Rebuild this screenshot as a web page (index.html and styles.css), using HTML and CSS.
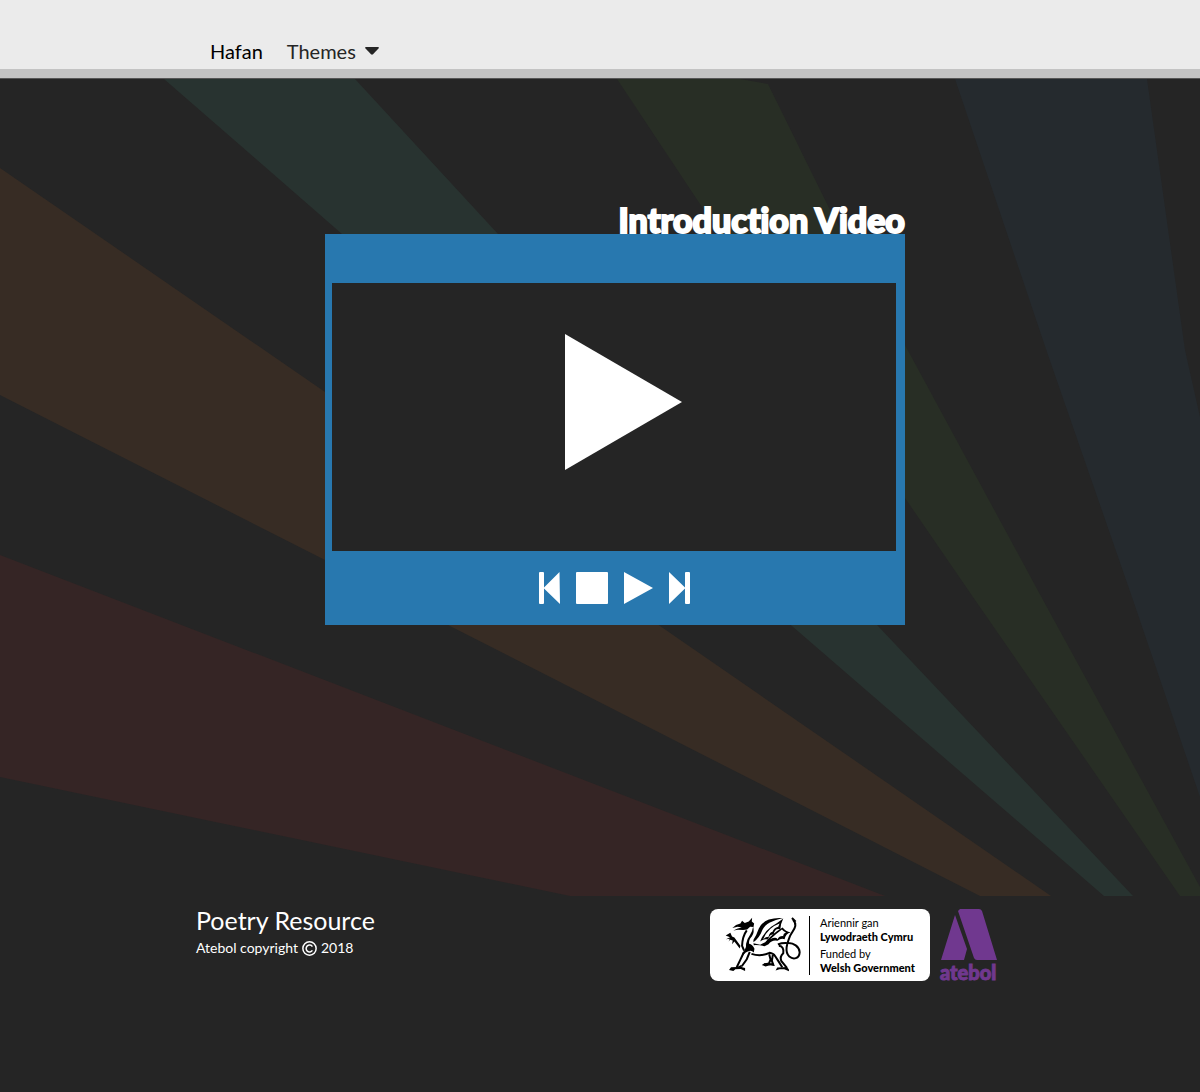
FILE: index.html
```html
<!DOCTYPE html>
<html lang="cy">
<head>
<meta charset="utf-8">
<meta name="viewport" content="width=device-width, initial-scale=1">
<title>Poetry Resource</title>
<link rel="stylesheet" href="styles.css">
</head>
<body>
<header class="site-header">
  <nav class="container nav">
    <a class="nav-link active" href="#">Hafan</a>
    <button class="nav-link nav-toggle" type="button">Themes
      <svg class="caret" viewBox="0 0 14 8" aria-hidden="true"><path d="M1 0h12q1.500 .2.500 1.500L8 7.300q-1 .9-2 0L.5 1.500Q-.5.200 1 0z"/></svg>
    </button>
  </nav>
</header>

<main class="hero">
  <svg class="rays" viewBox="0 0 1200 817" preserveAspectRatio="none" aria-hidden="true">
    <path fill="#372c24" d="M0 89 325 313 660 547 1051 817H980L780 715 450 547 325 481 0 316z"/>
    <path fill="#352525" d="M0 476 885 817H570L0 698z"/>
    <path fill="#283330" d="M164 0H355L498 155 878 547 1133 817H1104L792 547 342 155z"/>
    <path fill="#282e25" d="M617 0 740 0 768 5 830 131 905 266 1043 521 1200 808V817H1180L975 521 905 419 702 128z"/>
    <path fill="#252a2e" d="M955 0H1147L1185 271 1200 338V718L1133 521 1048 276z"/>
  </svg>
  <div class="container hero-inner">
    <section class="video">
      <h1 class="video-title">Introduction Video</h1>
      <div class="player">
        <button class="screen" type="button" aria-label="Play video">
          <svg class="big-play" viewBox="0 0 117 136"><path d="M0 0 117 68 0 136z"/></svg>
        </button>
        <div class="controls">
          <button type="button" aria-label="Previous"><svg width="21" height="32" viewBox="0 0 21 32"><path d="M1 0H4Q5 0 5 1V15.500L20.500 0 21 32 5 16.500V31Q5 32 4 32H1Q0 32 0 31V1Q0 0 1 0z"/></svg></button>
          <button type="button" aria-label="Stop"><svg width="32" height="32" viewBox="0 0 32 32"><rect width="32" height="32" rx="1"/></svg></button>
          <button type="button" aria-label="Play"><svg width="29" height="32" viewBox="0 0 29 32"><path d="M0 0 29 16 0 32z"/></svg></button>
          <button type="button" aria-label="Next"><svg width="21" height="32" viewBox="0 0 21 32"><path d="M0 0 16 15.500V1Q16 0 17 0H20Q21 0 21 1V31Q21 32 20 32H17Q16 32 16 31V16.500L0 32z"/></svg></button>
        </div>
      </div>
    </section>
  </div>
</main>

<footer class="container footer">
  <div>
    <h2 class="footer-title">Poetry Resource</h2>
    <p class="copyright">Atebol copyright
      <svg class="copy-icon" viewBox="0 0 14 14" role="img" aria-label="copyright"><circle cx="7" cy="7" r="6.200"/><path d="M9.700 5.200A3.200 3.200 0 1 0 9.700 8.800"/></svg>
      2018</p>
  </div>
  <div class="logos">
    <a class="gov" href="#">
      <svg class="dragon" viewBox="10 35 230 170" aria-hidden="true">
        <path d="M35 71 46 62 59 57 64 49 72 56 84 51 94 40 93 51 100 57 98 68 88 67 79 75 67 77 52 76 38 78 51 72 63 69 51 67z"/>
        <path d="M97 66Q102 84 93 96 83 106 85 118 95 120 101 133L99 144Q91 135 81 141 68 147 64 158 62 148 72 136 77 129 76 118 79 103 88 91 95 80 97 66z"/>
        <path d="M15 93 29 85 34 96 41 99 59 124 57 132 41 111 34 119 36 108 28 106 24 111 27 103 16 104 28 98z"/>
        <path d="M25 196 31 188 49 187 61 181 64 188 73 190 73 199 60 193 44 194 38 199zM123 181 131 176 158 177 161 184 150 181 134 186zM164 198 169 189 185 188 198 187 204 195 204 200 190 194 176 194z"/>
        <path d="M98 106Q107 92 114 72 125 52 144 45 164 39 186 41 164 46 147 54 131 62 125 76 115 102 98 113z"/>
        <path d="M118 111Q128 83 151 67 169 56 187 42 177 63 179 76 171 71 165 76 159 82 158 91 151 88 145 97L141 105Q130 102 118 111zM127 104Q135 97 143 97 146 84 155 82 159 70 172 67L176 57Q141 69 127 104z" fill-rule="evenodd"/>
        <path d="M98 116 118 121 133 113Q156 86 185 69 194 81 209 84 194 87 191 104 180 100 170 109 154 105 143 119L131 125Q113 121 99 122zM148 104Q165 96 170 104 175 94 187 95 186 87 195 84 186 79 183 75 163 90 148 104z" fill-rule="evenodd"/>
        <g class="line">
          <path d="M78 78Q65 96 64 124L70 138M69 144 59 165 48 188M87 142 78 164 63 185"/>
          <path d="M92 148Q120 157 146 145 157 146 163 155L172 169 184 188"/>
          <path d="M174 124Q190 126 187 146 176 156 181 169L198 190"/>
          <path d="M145 149 149 165 144 177 130 180M156 150 153 169 157 180 145 179"/>
          <path d="M171 120Q183 115 199 116C218 114 235 127 236 143 235 163 217 166 205 156 190 142 198 118 207 95 218 73 232 65 216 46M213 41 224 52"/>
        </g>
      </svg>
      <span class="gov-text">
        <span>Ariennir gan</span><strong>Lywodraeth Cymru</strong>
        <span class="second">Funded by</span><strong>Welsh Government</strong>
      </span>
    </a>
    <a class="atebol" href="#">
      <svg viewBox="0 0 57 52" aria-hidden="true"><path d="M20 0H39Q41 0 42 2L57 51H37Q35 51 34 49L18 2zM15 6 27 40 24 51H1z"/></svg>
      <span>atebol</span>
    </a>
  </div>
</footer>
</body>
</html>
```
FILE: styles.css
```css
* { box-sizing: border-box; }

body {
  margin: 0;
  background: #252525;
  color: #fff;
  font-family: Lato, "Liberation Sans", sans-serif;
}

h1, h2, p { margin: 0; }

button {
  padding: 0;
  border: 0;
  background: none;
  color: inherit;
  font: inherit;
  cursor: pointer;
}

svg { display: block; fill: currentColor; }

.container {
  width: 100%;
  max-width: 808px;
  margin: 0 auto;
}

.site-header {
  background: #ebebeb;
  border-bottom: 9px solid #c3c3c3;
}

.nav {
  display: flex;
  gap: 24px;
  padding: 37px 14px 4px;
}

.nav-link {
  color: #252525;
  font-size: 20px;
  line-height: 28px;
  text-decoration: none;
}

.nav-link.active { color: #000; }

.nav-toggle {
  display: flex;
  align-items: center;
  gap: 9px;
}

.caret { width: 14px; height: 8px; }

.hero {
  position: relative;
  border-top: 1px solid #555;
  padding: 127px 0 271px;
}

.rays {
  position: absolute;
  inset: 0;
  width: 100%;
  height: 100%;
}

.hero-inner {
  position: relative;
  display: flex;
  justify-content: center;
  padding-left: 30px;
}

.video { width: 100%; max-width: 580px; }

.video-title {
  font-size: 34px;
  font-weight: 900;
  font-variant-ligatures: none;
  line-height: 28px;
  text-align: right;
  -webkit-text-stroke: 2px currentColor;
}

.player {
  padding: 49px 9px 21px 7px;
  background: #2878af;
}

.screen {
  display: flex;
  justify-content: center;
  width: 100%;
  padding: 51px 0 81px 18px;
  background: #252525;
}

.big-play { width: 117px; height: 136px; }

.controls {
  display: flex;
  justify-content: center;
  gap: 16px;
  padding-top: 21px;
}

.footer {
  display: flex;
  justify-content: space-between;
  padding: 13px 7px 111px 0;
}

.footer-title {
  font-size: 25px;
  font-weight: 400;
  line-height: 22px;
}

.copyright {
  display: flex;
  gap: 4px;
  align-items: center;
  padding-top: 6px;
  font-size: 14px;
  line-height: 22px;
}

.copy-icon {
  width: 15px;
  height: 15px;
  fill: none;
  stroke: currentColor;
  stroke-width: 1.400;
}

.logos { display: flex; gap: 10px; }

.gov {
  display: flex;
  width: 220px;
  height: 72px;
  padding: 7px 0 6px 14px;
  border-radius: 8px;
  background: #fff;
  color: #000;
  text-decoration: none;
}

.dragon { width: 77px; height: 57px; }

.dragon .line { fill: none; stroke: #000; stroke-width: 6; }

.gov-text {
  display: flex;
  flex-direction: column;
  margin-left: 8px;
  padding-left: 10px;
  border-left: 1px solid #000;
  font-size: 11px;
  line-height: 14px;
  white-space: nowrap;
}

.gov-text strong { font-weight: 900; }

.second { padding-top: 3px; }

.atebol {
  width: 57px;
  color: #70388f;
  font-size: 20px;
  font-weight: 900;
  line-height: 22px;
  text-decoration: none;
  -webkit-text-stroke: 1px currentColor;
}
```
